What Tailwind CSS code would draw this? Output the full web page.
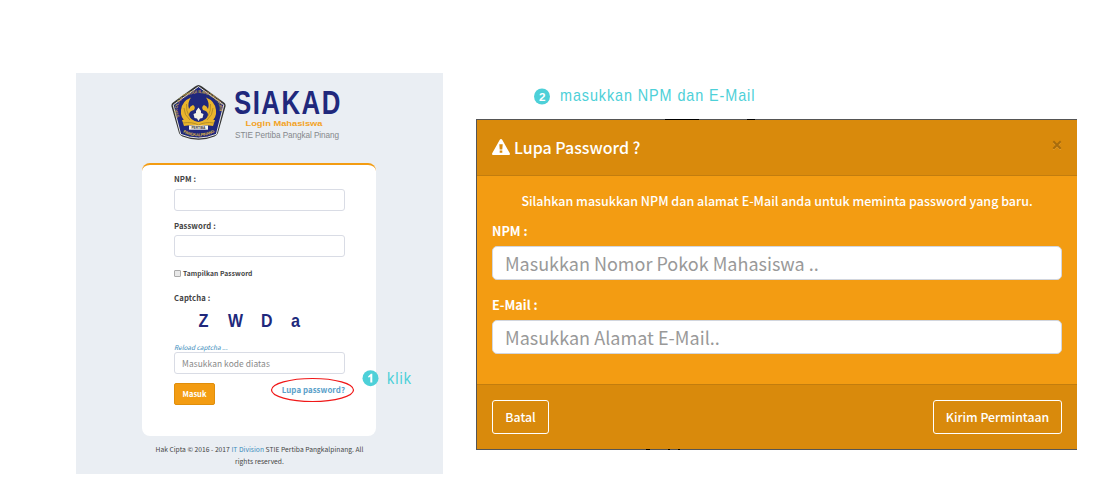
<!DOCTYPE html>
<html lang="id">
<head>
<meta charset="utf-8">
<title>SIAKAD - Login Mahasiswa</title>
<script src="https://cdn.jsdelivr.net/npm/@tailwindcss/browser@4"></script>
</head>
<body class="bg-white">
<div class="flex w-[1100px] h-[500px] overflow-hidden pl-[76px] pt-[73px] gap-[33px] font-['Noto_Sans_CJK_SC',sans-serif] whitespace-nowrap">

  <section class="relative flex flex-col w-[367px] h-[401px] shrink-0 bg-[#eaeef3]">
    <header class="flex h-[90px] pl-[94px] pt-[11px] gap-[8px] shrink-0">
      <svg class="w-[57px] h-[57px] shrink-0" viewBox="0 0 57 57">
        <path d="M28.500 1 Q30 1 32 2.500 L54 18.500 Q56 20 55.500 22.500 L48 49 Q47 51.500 44.500 52.500 Q28.500 59 12.500 52.500 Q10 51.500 9 49 L1.500 22.500 Q1 20 3 18.500 L25 2.500 Q27 1 28.500 1Z" fill="#333"/>
        <path d="M28.500 2.600 L53.800 21 L46.300 50.300 Q28.500 57.800 10.700 50.300 L3.200 21Z" fill="#20287c" stroke="#e4e4e0" stroke-width="1" stroke-linejoin="round"/>
        <path id="arc1" d="M9.500 33 Q3.500 20 15.500 13 Q28.500 5 41.500 13 Q53.500 20 47.500 33" fill="none"/>
        <path id="arc2" d="M13 48.500 Q28.500 56 44 48.500" fill="none"/>
        <text class="font-['Liberation_Sans',sans-serif] font-bold" font-size="4.400" fill="#c5a04c"><textPath href="#arc1" textLength="68">SEKOLAH TINGGI ILMU EKONOMI</textPath></text>
        <text class="font-['Liberation_Sans',sans-serif] font-bold" font-size="4.200" fill="#d9b44a"><textPath href="#arc2" textLength="33">PANGKALPINANG</textPath></text>
        <g fill="#eab52c">
          <path d="M21 13.500 Q12 17 11 26 Q10 34 17 39 L27.500 42 Q19 37 19 31 Q19 27 24 26 Q26 23 23 21 Q20 22 19 25 Q17 19 21 13.500Z"/>
          <path d="M36 13.500 Q45 17 46 26 Q47 34 40 39 L29.500 42 Q38 37 38 31 Q38 27 33 26 Q31 23 34 21 Q37 22 38 25 Q40 19 36 13.500Z"/>
          <path d="M18 29 Q20 37 28.500 38 Q37 37 39 29 Q41 35 37 39 L28.500 42 L20 39 Q16 35 18 29Z"/>
          <path d="M12 36 Q21 35 28.500 39 Q36 35 45 36 L43 42 Q34 40 28.500 43 Q23 40 14 42Z"/>
        </g>
        <path d="M14 24 Q14 31 20 36 M43 24 Q43 31 37 36 M16.500 20 Q16 27 19 32 M40.500 20 Q41 27 38 32 M13 39 Q22 37.500 28.500 41 Q35 37.500 44 39" fill="none" stroke="#9b7b28" stroke-width=".7"/>
        <path d="M28.500 23.500 L31 27 L31 29 L33.500 30 L32.500 34 L30 34.500 L28.500 37 L27 34.500 L24.500 34 L23.500 30 L26 29 L26 27Z" fill="#f4f2e8"/>
        <rect x="19" y="41.500" width="19" height="4.200" fill="#f7f5ee"/>
        <text x="21.500" y="44.900" textLength="14" class="font-['Liberation_Sans',sans-serif] font-bold" font-size="3.400" fill="#444">PERTIBA</text>
      </svg>
      <svg class="w-[112px] h-[60px] shrink-0 overflow-visible font-['Liberation_Sans',sans-serif]" viewBox="0 0 112 60">
        <text transform="translate(-1 30.300) scale(.76 1)" font-size="34" font-weight="700" textLength="140" fill="#20287c">SIAKAD</text>
        <text x="10.500" y="41.500" font-size="8" font-weight="700" textLength="77" lengthAdjust="spacingAndGlyphs" fill="#f3a326">Login Mahasiswa</text>
        <text x="0" y="53.500" font-size="8.200" textLength="104" fill="#85888c">STIE Pertiba Pangkal Pinang</text>
      </svg>
    </header>

    <main class="flex flex-col ml-[66px] w-[234px] h-[273px] shrink-0 bg-white rounded-[8px] border-t-2 border-[#f39c12] pl-[32px] text-[7.7px] font-bold text-[#444]">
      <label class="h-[10px] mt-[9px] leading-[10px] tracking-[.1px]">NPM :</label>
      <div class="w-[171px] h-[22px] mt-[5px] border border-[#d9dce5] rounded-[3px]"></div>
      <label class="h-[10px] mt-[10px] leading-[10px] tracking-[.1px]">Password :</label>
      <div class="w-[171px] h-[22px] mt-[4px] border border-[#d9dce5] rounded-[3px]"></div>
      <div class="flex items-center h-[10px] mt-[11px] gap-[2px] text-[6.7px] leading-[10px] tracking-[.08px]"><span class="size-[7px] border border-[#aaa] rounded-[1px] bg-[#e8e8e8]"></span>Tampilkan Password</div>
      <label class="h-[10px] mt-[15px] leading-[10px] tracking-[.15px]">Captcha :</label>
      <svg class="w-[140px] h-[30px] mt-[5px] font-['Liberation_Sans',sans-serif]" viewBox="0 0 140 30">
        <g font-size="18.500" font-weight="700" fill="#20287c"><text x="24.500" y="19" textLength="10" lengthAdjust="spacingAndGlyphs">Z</text><text x="54" y="19" textLength="15" lengthAdjust="spacingAndGlyphs">W</text><text x="87" y="19" textLength="11.500" lengthAdjust="spacingAndGlyphs">D</text><text x="117" y="19" textLength="9" lengthAdjust="spacingAndGlyphs">a</text></g>
      </svg>
      <div class="h-[8px] mt-[5px] leading-[8px] text-[6.5px] italic font-normal text-[#3c8dbc]">Reload captcha ...</div>
      <div class="w-[171px] h-[22px] mt-px border border-[#d9dce5] rounded-[3px] pl-[7px] leading-[20px] text-[8.4px] tracking-[.08px] font-normal text-[#888]">Masukkan kode diatas</div>
      <div class="flex justify-between w-[171px] mt-[9px]">
        <div class="w-[41px] h-[22px] rounded-[2px] bg-[#f39c12] border border-[#e08e0b] text-center leading-[20px] text-white text-[7.5px]">Masuk</div>
        <a class="h-[12px] leading-[13px] text-[7.9px] tracking-[.05px] text-[#5ba1ca]">Lupa password?</a>
      </div>
    </main>
    <footer class="mt-[7px] text-center text-[6.7px] tracking-[.03px] leading-[12px] text-[#444]">Hak Cipta © 2016 - 2017 <span class="text-[#3c8dbc]">IT Division</span> STIE Pertiba Pangkalpinang. All<br>rights reserved.</footer>

    <svg class="absolute left-[190px] top-[295px] w-[150px] h-[40px] font-['Liberation_Sans',sans-serif]" viewBox="0 0 150 40">
      <ellipse cx="46.500" cy="22" rx="41" ry="11.500" fill="none" stroke="#f01818" stroke-width="1.200"/>
      <circle cx="104.500" cy="10.200" r="8" fill="#4dd0d8"/>
      <path d="M102 8.500 L105 5.800 H106.300 V14.500 H104.300 V8.400 L102.800 9.700Z" fill="#fff"/>
      <text transform="translate(121 16) scale(.9 1)" font-size="16" textLength="26.500" fill="#4dd0d8">klik</text>
    </svg>
  </section>

  <section class="flex flex-col w-[601px] shrink-0">
    <div class="h-[46px] shrink-0">
      <svg class="w-[300px] h-[46px] font-['Liberation_Sans',sans-serif]" viewBox="0 0 300 46">
        <circle cx="66" cy="23.500" r="8" fill="#4dd0d8"/>
        <text x="63" y="27.500" font-size="11" font-weight="700" textLength="6.500" lengthAdjust="spacingAndGlyphs" fill="#fff">2</text>
        <text transform="translate(84 28) scale(.9 1)" font-size="16" textLength="216" fill="#4dd0d8">masukkan NPM dan E-Mail</text>
      </svg>
    </div>
    <div class="relative flex flex-col h-[331px] border-t border-l border-b border-[#555] bg-[#f39c12] text-white">
      <i class="absolute left-[188px] -top-px w-[34px] h-px bg-black"></i>
      <i class="absolute left-[270px] -top-px w-[8px] h-px bg-black"></i>
      <i class="absolute left-[169px] -bottom-px w-[4px] h-px bg-black"></i>
      <i class="absolute left-[191px] -bottom-px w-[2px] h-px bg-black"></i>
      <i class="absolute left-[201px] -bottom-px w-[2px] h-px bg-black"></i>
      <header class="flex items-center h-[56px] shrink-0 pl-[15px] pr-[15px] bg-[#d98a0c] border-b border-[#c27d0e]">
        <svg class="w-[18px] h-[16px] shrink-0 -mt-[2px]" viewBox="0 0 18 16"><path fill="#fff" fill-rule="evenodd" d="M9 0 Q9.800 0 10.200 .8 L17.800 14.200 Q18.500 16 16.800 16 H1.200 Q-.5 16 .2 14.200 L7.800 .8 Q8.200 0 9 0Z M7.300 5.200 L7.700 10.500 H10.300 L10.700 5.200Z M7.700 11.500 V13.800 H10.300 V11.500Z"/></svg>
        <h1 class="ml-[4px] -mt-[2px] text-[16px] leading-[20px] font-medium">Lupa Password ?</h1>
        <svg class="ml-auto mt-[-6px] w-[10px] h-[10px]" viewBox="0 0 10 10"><path d="M1.300 2.300 L8.700 9.700 M8.700 2.300 L1.300 9.700" stroke="#eba53a" stroke-width="1.500"/><path d="M1.300 1.300 L8.700 8.700 M8.700 1.300 L1.300 8.700" stroke="#a86c0c" stroke-width="2"/></svg>
      </header>
      <div class="flex flex-col h-[208px] shrink-0 px-[15px]">
        <p class="mt-[15px] h-[20px] leading-[20px] text-center text-[12.5px] font-medium">Silahkan masukkan NPM dan alamat E-Mail anda untuk meminta password yang baru.</p>
        <label class="mt-[10px] h-[20px] leading-[20px] text-[12.6px] font-bold">NPM :</label>
        <div class="mt-[5px] h-[34px] shrink-0 rounded-[5px] border border-[#d2d6de] bg-white pl-[12px] leading-[33px] text-[18px] text-[#999]">Masukkan Nomor Pokok Mahasiswa ..</div>
        <label class="mt-[15px] h-[20px] leading-[20px] text-[12.7px] font-bold">E-Mail :</label>
        <div class="mt-[5px] h-[34px] shrink-0 rounded-[5px] border border-[#d2d6de] bg-white pl-[12px] leading-[33px] text-[18px] tracking-[.03px] text-[#999]">Masukkan Alamat E-Mail..</div>
      </div>
      <footer class="flex justify-between grow px-[15px] pt-[15px] bg-[#d98a0c] border-t border-[#c27d0e] text-[12.3px] font-medium leading-[32px] text-center">
        <div class="w-[57px] h-[34px] border border-white rounded-[3px]">Batal</div>
        <div class="w-[129px] h-[34px] border border-white rounded-[3px]">Kirim Permintaan</div>
      </footer>
    </div>
  </section>
</div>
</body>
</html>
